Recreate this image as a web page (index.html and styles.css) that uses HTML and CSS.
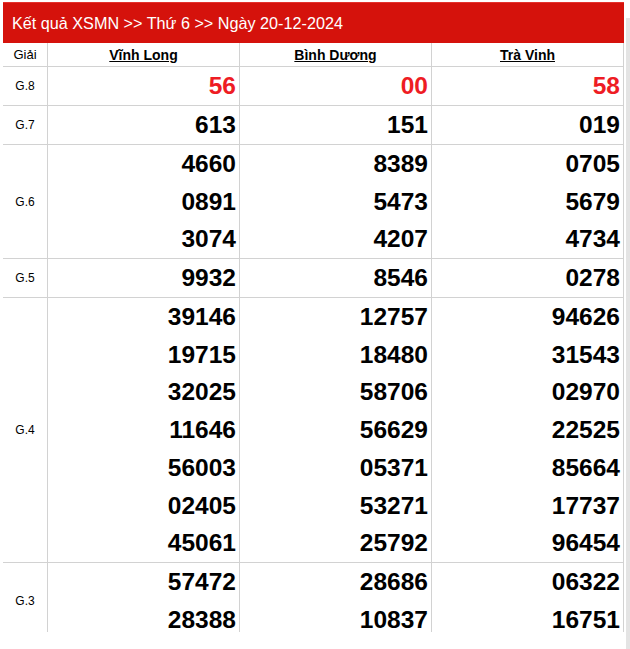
FILE: index.html
```html
<!DOCTYPE html>
<html lang="vi">
<head>
<meta charset="utf-8">
<title>Kết quả XSMN</title>
<link rel="stylesheet" href="styles.css">
</head>
<body>
<div class="layout">
  <div class="page">
    <div class="title">Kết quả XSMN &gt;&gt; Thứ 6 &gt;&gt; Ngày 20-12-2024</div>
    <table class="results">
      <colgroup>
        <col class="c-label"><col class="c-prov"><col class="c-prov"><col class="c-prov">
      </colgroup>
      <thead>
        <tr>
          <th class="label-head">Giải</th>
          <th><a class="prov">Vĩnh Long</a></th>
          <th><a class="prov">Bình Dương</a></th>
          <th><a class="prov">Trà Vinh</a></th>
        </tr>
      </thead>
      <tbody>
        <tr>
          <td class="label">G.8</td>
          <td class="num red"><div>56</div></td>
          <td class="num red"><div>00</div></td>
          <td class="num red"><div>58</div></td>
        </tr>
        <tr>
          <td class="label">G.7</td>
          <td class="num"><div>613</div></td>
          <td class="num"><div>151</div></td>
          <td class="num"><div>019</div></td>
        </tr>
        <tr>
          <td class="label">G.6</td>
          <td class="num"><div>4660</div><div>0891</div><div>3074</div></td>
          <td class="num"><div>8389</div><div>5473</div><div>4207</div></td>
          <td class="num"><div>0705</div><div>5679</div><div>4734</div></td>
        </tr>
        <tr>
          <td class="label">G.5</td>
          <td class="num"><div>9932</div></td>
          <td class="num"><div>8546</div></td>
          <td class="num"><div>0278</div></td>
        </tr>
        <tr>
          <td class="label">G.4</td>
          <td class="num"><div>39146</div><div>19715</div><div>32025</div><div>11646</div><div>56003</div><div>02405</div><div>45061</div></td>
          <td class="num"><div>12757</div><div>18480</div><div>58706</div><div>56629</div><div>05371</div><div>53271</div><div>25792</div></td>
          <td class="num"><div>94626</div><div>31543</div><div>02970</div><div>22525</div><div>85664</div><div>17737</div><div>96454</div></td>
        </tr>
        <tr>
          <td class="label">G.3</td>
          <td class="num"><div>57472</div><div>28388</div></td>
          <td class="num"><div>28686</div><div>10837</div></td>
          <td class="num"><div>06322</div><div>16751</div></td>
        </tr>
      </tbody>
    </table>
  </div>
  <div class="scroll-strip"></div>
</div>
</body>
</html>
```

FILE: styles.css
```css
html, body {
  margin: 0;
  padding: 0;
  background: #ffffff;
}

body {
  font-family: "Liberation Sans", Arial, sans-serif;
  color: #000;
}

.layout {
  display: flex;
  align-items: flex-start;
  height: 649px;
}

.page {
  width: 621px;
  height: 630px;
  margin: 2px 0 0 3px;
  overflow: hidden;
}

.scroll-strip {
  width: 4px;
  height: 631px;
  margin: 18px 0 0 2px;
  background: #e4e4e4;
}

.title {
  height: 41px;
  box-sizing: border-box;
  border-top: 1px solid #e5312c;
  background: #d5120c;
  color: #fff;
  font-size: 16.2px;
  line-height: 40px;
  padding-left: 9px;
  white-space: nowrap;
}

.results {
  width: 622px;
  border-collapse: collapse;
  table-layout: fixed;
  margin-left: -1px;
}

.c-label { width: 45px; }
.c-prov { width: 192px; }

.results th,
.results td {
  border: 1px solid #d2d2d2;
  padding: 0;
}

.results thead tr:first-child th {
  border-top: none;
}

.results th {
  height: 23px;
  font-size: 14px;
  font-weight: bold;
  text-align: center;
  vertical-align: middle;
}

.results th.label-head {
  font-weight: normal;
  font-size: 13px;
}

.prov {
  color: #000;
  text-decoration: underline;
}

.label {
  font-size: 12px;
  text-align: center;
  vertical-align: middle;
}

.num {
  height: 38px;
  text-align: right;
  vertical-align: middle;
  padding-right: 3px !important;
  font-size: 24.5px;
  font-weight: bold;
}

.num div {
  height: 37.7px;
  line-height: 38px;
}

.num.red {
  color: #ee1c24;
}
```
